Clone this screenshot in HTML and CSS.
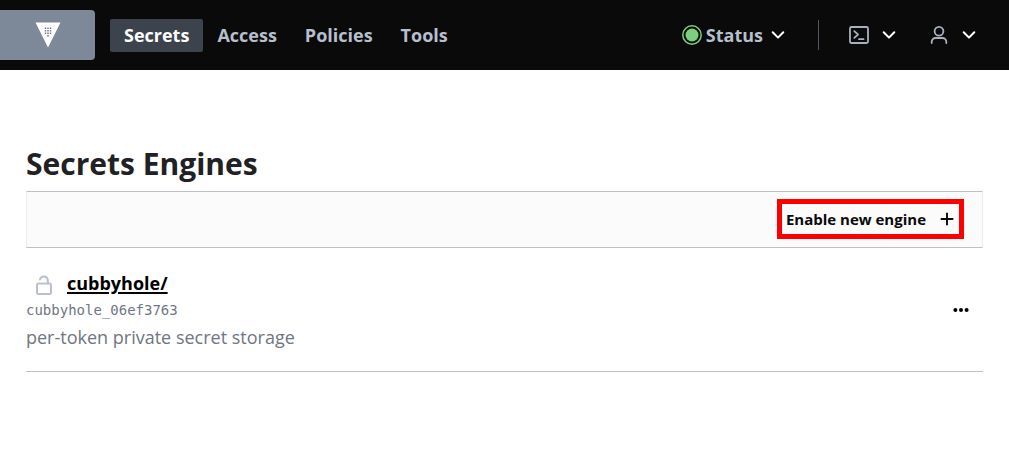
FILE: index.html
```html
<!DOCTYPE html>
<html lang="en">
<head>
<meta charset="utf-8">
<title>Secrets Engines</title>
<link rel="stylesheet" href="styles.css">
</head>
<body>
<header class="topbar">
  <a class="logo" href="#" aria-label="Home">
    <svg width="26" height="26" viewBox="0 0 26 26"><path d="M0.500 0.500h25L13 25.500z" fill="#fff"/><path d="M10.500 5.500v7M13 5.500v9.400M15.500 5.500v7" stroke="#6f7a8c" stroke-width="1.500" stroke-dasharray="1.500 1"/></svg>
  </a>
  <nav class="nav">
    <a class="nav-link active" href="#">Secrets</a>
    <a class="nav-link" href="#">Access</a>
    <a class="nav-link" href="#">Policies</a>
    <a class="nav-link" href="#">Tools</a>
  </nav>
  <div class="tools">
    <button class="tool status" type="button">
      <svg width="20" height="20" viewBox="0 0 20 20"><circle cx="10" cy="10" r="9.200" fill="none" stroke="#7bcf7f" stroke-width="1.500"/><circle cx="10" cy="10" r="6.500" fill="#7bcf7f"/></svg>
      <span class="status-text">Status</span>
      <svg class="chevron" width="14" height="10" viewBox="0 0 14 10"><path d="M1.700 2.200L7 7.600l5.300-5.400"/></svg>
    </button>
    <button class="tool console" type="button" aria-label="Console">
      <svg class="glyph" width="20" height="20" viewBox="0 0 20 20"><rect x="1" y="2" width="18" height="16" rx="1.500"/><path d="M5.300 6.200l3.700 3.300-3.700 3.300M10 14.200h4.500"/></svg>
      <svg class="chevron" width="14" height="10" viewBox="0 0 14 10"><path d="M1.700 2.200L7 7.600l5.300-5.400"/></svg>
    </button>
    <button class="tool user" type="button" aria-label="User">
      <svg class="glyph" width="20" height="20" viewBox="0 0 20 20"><circle cx="10" cy="6.200" r="4.400"/><path d="M2.700 18v-1.200a3.800 3.800 0 0 1 3.800-3.800h7a3.800 3.800 0 0 1 3.800 3.800V18"/></svg>
      <svg class="chevron" width="14" height="10" viewBox="0 0 14 10"><path d="M1.700 2.200L7 7.600l5.300-5.400"/></svg>
    </button>
  </div>
</header>
<main class="page">
  <h1 class="title">Secrets Engines</h1>
  <div class="toolbar">
    <a class="enable" href="#">Enable new engine
      <svg width="14" height="14" viewBox="0 0 14 14"><path d="M7 0.700v12.600M0.700 7h12.600" stroke="#0a0a0a" stroke-width="1.900"/></svg>
    </a>
  </div>
  <section class="engine">
    <div class="details">
      <div class="name-row">
        <svg width="16" height="20" viewBox="0 0 16 20"><rect x="1" y="8.500" width="14" height="10.500" rx="1.500"/><path d="M4 4.500A4 4 0 0 1 11.800 5v3.500"/></svg>
        <a class="name" href="#">cubbyhole/</a>
      </div>
      <code class="accessor">cubbyhole_06ef3763</code>
      <p class="description">per-token private secret storage</p>
    </div>
    <button class="more" type="button" aria-label="More options">
      <svg width="16" height="6" viewBox="0 0 16 6"><circle cx="2.400" cy="3" r="2"/><circle cx="8" cy="3" r="2"/><circle cx="13.600" cy="3" r="2"/></svg>
    </button>
  </section>
</main>
</body>
</html>
```
FILE: styles.css
```css
* { box-sizing: border-box; }
body { margin: 0; background: #fff; color: #1f2124; font-family: "Open Sans", "Noto Sans", sans-serif; }
svg { display: block; flex: none; }
a { text-decoration: none; }
button { padding: 0; border: 0; background: none; font: inherit; color: inherit; cursor: pointer; }

.topbar { display: flex; align-items: center; height: 70px; background: #0a0a0a; }
.logo { display: flex; align-items: center; justify-content: center; width: 95px; height: 50px; border-radius: 0 4px 4px 0; background: #7d8899; }
.nav { display: flex; margin-left: 15px; }
.nav-link { padding: 0 14px; border-radius: 2px; color: #b8bfcc; font-size: 18px; font-weight: 700; line-height: 33px; }
.nav-link.active { background: #3d434d; color: #fff; }

.tools { display: flex; align-items: center; margin-left: auto; padding-right: 33px; color: #b8bfcc; }
.tool { display: flex; align-items: center; }
.status { gap: 4px; padding-right: 33px; font-size: 18px; font-weight: 700; line-height: 30px; border-right: 1px solid #525761; }
.status .chevron { margin-left: 4px; }
.console { gap: 13px; margin-left: 30px; }
.user { gap: 13px; margin-left: 33px; }
.chevron { fill: none; stroke: #fff; stroke-width: 2; stroke-linecap: round; stroke-linejoin: round; }
.glyph { fill: none; stroke: #a9b1be; stroke-width: 1.8; stroke-linejoin: round; stroke-linecap: round; }

.page { padding: 74px 26px 0; }
.title { margin: 0; font-size: 30px; font-weight: 700; line-height: 40px; }
.toolbar { display: flex; align-items: flex-start; justify-content: flex-end; height: 57px; margin-top: 7px; padding: 7px 18px 0 0; background: #fbfbfb; border: 1px solid #ebedf0; border-top-color: #bac1cc; border-bottom-color: #bac1cc; }
.enable { display: flex; align-items: center; gap: 14px; height: 40px; padding: 0 5px 0 4px; border: 5px solid #f00; color: #0a0a0a; font-size: 15px; font-weight: 700; line-height: 28px; }
.engine { display: flex; align-items: center; justify-content: space-between; padding: 22px 14px 21px 0; border-bottom: 1px solid #bac1cc; box-shadow: 0 1px 0 #ebeef2; }
.name-row { display: flex; align-items: center; gap: 15px; padding-left: 10px; line-height: 26px; }
.name-row svg { margin-top: 3px; fill: none; stroke: #bac1cc; stroke-width: 2; stroke-linecap: round; }
.name { color: #000; font-size: 18px; font-weight: 700; text-decoration: underline; text-underline-offset: 2px; text-decoration-thickness: 2px; }
.accessor { display: block; color: #6f7682; font-family: "DejaVu Sans Mono", monospace; font-size: 14px; line-height: 28px; }
.description { margin: 0; color: #6f7682; font-size: 18px; line-height: 26px; }
.more { padding: 4px 0; }
```
